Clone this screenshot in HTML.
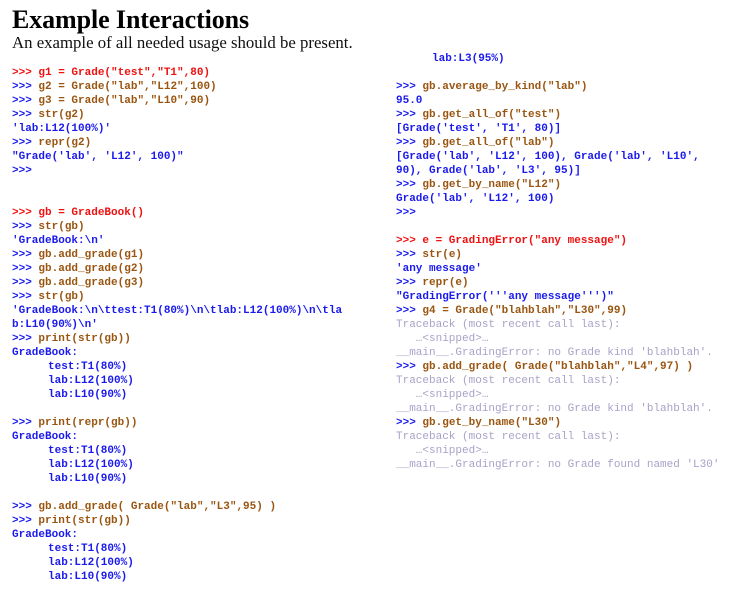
<!DOCTYPE html>
<html><head><meta charset="utf-8"><style>
body{margin:0;width:739px;height:599px;background:#fff;position:relative;overflow:hidden}
h1{position:absolute;left:12px;top:5px;margin:0;font:bold 26px "Liberation Serif",serif;color:#000;letter-spacing:-0.1px}
.sub{position:absolute;left:12px;top:33px;font:16.8px "Liberation Serif",serif;color:#111}
pre{position:absolute;margin:0;font:bold 11px/14px "Liberation Mono",monospace;color:#1a1aee;white-space:pre}
.r{color:#f01010}.b{color:#1a1aee}.o{color:#9a5510}.g{color:#a8a2c8;font-weight:normal}
.i{padding-left:36px}
</style></head><body>
<h1>Example Interactions</h1>
<div class="sub">An example of all needed usage should be present.</div>
<pre style="left:12px;top:66px"><span class="r">&gt;&gt;&gt; g1 = Grade("test","T1",80)</span>
<span class="b">&gt;&gt;&gt;</span> <span class="o">g2 = Grade("lab","L12",100)</span>
<span class="b">&gt;&gt;&gt;</span> <span class="o">g3 = Grade("lab","L10",90)</span>
<span class="b">&gt;&gt;&gt;</span> <span class="o">str(g2)</span>
'lab:L12(100%)'
<span class="b">&gt;&gt;&gt;</span> <span class="o">repr(g2)</span>
"Grade('lab', 'L12', 100)"
&gt;&gt;&gt;


<span class="r">&gt;&gt;&gt; gb = GradeBook()</span>
<span class="b">&gt;&gt;&gt;</span> <span class="o">str(gb)</span>
'GradeBook:\n'
<span class="b">&gt;&gt;&gt;</span> <span class="o">gb.add_grade(g1)</span>
<span class="b">&gt;&gt;&gt;</span> <span class="o">gb.add_grade(g2)</span>
<span class="b">&gt;&gt;&gt;</span> <span class="o">gb.add_grade(g3)</span>
<span class="b">&gt;&gt;&gt;</span> <span class="o">str(gb)</span>
'GradeBook:\n\ttest:T1(80%)\n\tlab:L12(100%)\n\tla
b:L10(90%)\n'
<span class="b">&gt;&gt;&gt;</span> <span class="o">print(str(gb))</span>
GradeBook:
<span class="i">test:T1(80%)</span>
<span class="i">lab:L12(100%)</span>
<span class="i">lab:L10(90%)</span>

<span class="b">&gt;&gt;&gt;</span> <span class="o">print(repr(gb))</span>
GradeBook:
<span class="i">test:T1(80%)</span>
<span class="i">lab:L12(100%)</span>
<span class="i">lab:L10(90%)</span>

<span class="b">&gt;&gt;&gt;</span> <span class="o">gb.add_grade( Grade("lab","L3",95) )</span>
<span class="b">&gt;&gt;&gt;</span> <span class="o">print(str(gb))</span>
GradeBook:
<span class="i">test:T1(80%)</span>
<span class="i">lab:L12(100%)</span>
<span class="i">lab:L10(90%)</span></pre>
<pre style="left:396px;top:52px"><span class="i">lab:L3(95%)</span>

<span class="b">&gt;&gt;&gt;</span> <span class="o">gb.average_by_kind("lab")</span>
95.0
<span class="b">&gt;&gt;&gt;</span> <span class="o">gb.get_all_of("test")</span>
[Grade('test', 'T1', 80)]
<span class="b">&gt;&gt;&gt;</span> <span class="o">gb.get_all_of("lab")</span>
[Grade('lab', 'L12', 100), Grade('lab', 'L10',
90), Grade('lab', 'L3', 95)]
<span class="b">&gt;&gt;&gt;</span> <span class="o">gb.get_by_name("L12")</span>
Grade('lab', 'L12', 100)
&gt;&gt;&gt;

<span class="r">&gt;&gt;&gt; e = GradingError("any message")</span>
<span class="b">&gt;&gt;&gt;</span> <span class="o">str(e)</span>
'any message'
<span class="b">&gt;&gt;&gt;</span> <span class="o">repr(e)</span>
"GradingError('''any message''')"
<span class="b">&gt;&gt;&gt;</span> <span class="o">g4 = Grade("blahblah","L30",99)</span>
<span class="g">Traceback (most recent call last):
   …&lt;snipped&gt;…
__main__.GradingError: no Grade kind 'blahblah'.</span>
<span class="b">&gt;&gt;&gt;</span> <span class="o">gb.add_grade( Grade("blahblah","L4",97) )</span>
<span class="g">Traceback (most recent call last):
   …&lt;snipped&gt;…
__main__.GradingError: no Grade kind 'blahblah'.</span>
<span class="b">&gt;&gt;&gt;</span> <span class="o">gb.get_by_name("L30")</span>
<span class="g">Traceback (most recent call last):
   …&lt;snipped&gt;…
__main__.GradingError: no Grade found named 'L30'</span></pre>
</body></html>
